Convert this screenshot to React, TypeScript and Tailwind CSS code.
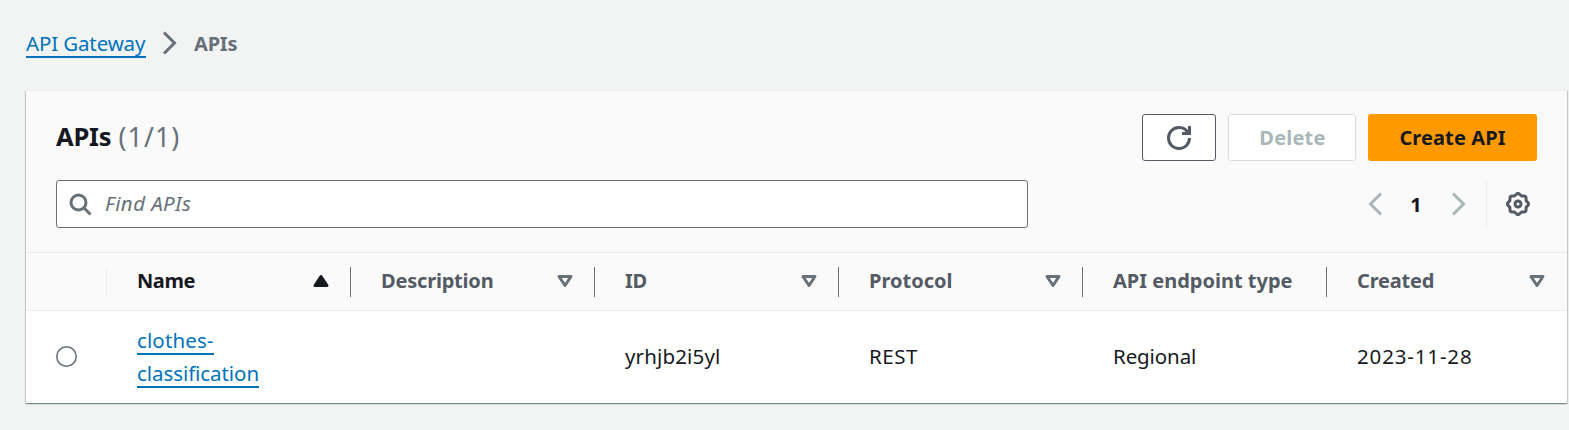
import React from "react";

const headCell = "flex h-[30px] items-center justify-between pb-[2px] pl-[30px]";

// Scalloped outline with eight rounded teeth
const gearPath =
  Array.from({ length: 96 }, (_, i) => {
    const a = (i / 96) * Math.PI * 2;
    const r = 9.7 + 0.85 * Math.cos(8 * a);
    return `${i ? "L" : "M"}${(12 + r * Math.cos(a)).toFixed(2)} ${(12 + r * Math.sin(a)).toFixed(2)}`;
  }).join("") + "z";

function SortIcon() {
  return (
    <svg viewBox="0 0 16 16" className="size-6 shrink-0 fill-none stroke-[#687078] stroke-2">
      <path d="M4 5h8l-4 6-4-6z" strokeLinejoin="round" />
    </svg>
  );
}

function Column({ label, className, sortable = true, last = false }: { label: string; className: string; sortable?: boolean; last?: boolean }) {
  return (
    <div className={`${headCell} ${last ? "flex-1 pr-[18px]" : "w-[244px] border-r border-[#687078] pr-[17px]"}`}>
      <span className={`whitespace-nowrap ${className}`}>{label}</span>
      {sortable && <SortIcon />}
    </div>
  );
}

export default function App() {
  return (
    <div className="h-[430px] w-[1569px] overflow-hidden bg-[#f2f3f3] pl-[26px] pr-[2px] font-['Noto_Sans',sans-serif] text-[20.5px] leading-[33px] text-[#16191f]">
      <nav className="flex h-[90px] items-start pt-[27px]">
        <a className="h-[31px] w-[120px] whitespace-nowrap border-b-2 border-[#0073bb] tracking-[-0.14px] text-[#0073bb]">API Gateway</a>
        <svg viewBox="0 0 16 16" className="ml-3 mt-1 size-6 fill-none stroke-[#687078] stroke-2">
          <path d="m4 1 7 7-7 7" />
        </svg>
        <span className="ml-3 text-[20px] font-bold tracking-[-0.2px] text-[#687078]">APIs</span>
      </nav>

      <main className="h-[313px] border-t border-[#eaeded] bg-white shadow-[0_1px_1px_0_rgba(0,28,36,0.3),1px_1px_1px_0_rgba(0,28,36,0.15),-1px_1px_1px_0_rgba(0,28,36,0.15)]">
        <header className="h-[161px] bg-[#fafafa] px-[30px] pt-[23px]">
          <div className="flex h-[47px] items-center justify-between">
            <h1 className="flex items-center gap-[7px] pb-[2px] text-[25.5px] font-bold tracking-[-0.2px]">
              APIs
              <span className="pt-px text-[26.5px] font-normal tracking-[1.2px] text-[#687078]">(1/1)</span>
            </h1>
            <div className="flex gap-3 text-[20px] font-bold">
              <button className="flex h-[47px] w-[74px] items-center justify-center rounded-[3px] border border-[#545b64] bg-white">
                <svg viewBox="0 0 16 16" className="size-6 overflow-visible fill-none stroke-[#545b64] stroke-2">
                  <path d="M10 5h5V0" />
                  <path d="M15 8a6.957 6.957 0 0 1-7 7 6.957 6.957 0 0 1-7-7 6.957 6.957 0 0 1 7-7 6.87 6.87 0 0 1 6.3 4" />
                </svg>
              </button>
              <button className="h-[47px] w-32 rounded-[3px] border border-[#d5dbdb] bg-white pl-px tracking-[0.2px] text-[#aab7b8]">Delete</button>
              <button className="h-[47px] w-[169px] rounded-[3px] bg-[#ff9900] tracking-[0.1px]">Create API</button>
            </div>
          </div>
          <div className="mt-[19px] flex items-center justify-between">
            <div className="flex h-12 w-[972px] items-center rounded-[3px] border border-[#687078] bg-white pl-[11px] text-[#687078]">
              <svg viewBox="0 0 16 16" className="size-6 overflow-visible fill-none stroke-[#687078] stroke-2">
                <circle cx="7" cy="7" r="5" />
                <path d="m15 15-4.5-4.5" />
              </svg>
              <span className="ml-[13px] pb-[2px] italic tracking-[0.4px]">Find APIs</span>
            </div>
            <div className="flex items-center">
              <svg viewBox="0 0 16 16" className="size-6 fill-none stroke-[#aab7b8] stroke-2">
                <path d="m12 1-7 7 7 7" />
              </svg>
              <span className="w-[60px] pr-[2px] text-center text-[20px] font-bold">1</span>
              <svg viewBox="0 0 16 16" className="size-6 fill-none stroke-[#aab7b8] stroke-2">
                <path d="m4 1 7 7-7 7" />
              </svg>
              <span className="ml-[15px] h-[47px] w-px bg-[#eaeded]" />
              <svg viewBox="0 0 24 24" className="ml-[19px] mr-[7px] size-6 overflow-visible fill-none stroke-[#545b64] stroke-3">
                <path d={gearPath} strokeLinejoin="round" />
                <circle cx="12" cy="12" r="3" />
              </svg>
            </div>
          </div>
        </header>

        <div className="flex h-[59px] items-center border-y border-[#eaeded] bg-[#fafafa] text-[20px] font-bold text-[#545b64]">
          <div className="h-[30px] w-[81px] border-r border-[#eaeded]" />
          <div className={`${headCell} w-[244px] border-r border-[#687078] pr-[17px] text-[#16191f]`}>
            <span className="tracking-[-0.4px]">Name</span>
            <svg viewBox="0 0 16 16" className="size-6 fill-[#16191f] stroke-[#16191f] stroke-2">
              <path d="M4 11h8L8 5l-4 6z" strokeLinejoin="round" />
            </svg>
          </div>
          <Column label="Description" className="tracking-[-0.2px]" />
          <Column label="ID" className="tracking-[-0.4px]" />
          <Column label="Protocol" className="" />
          <Column label="API endpoint type" className="" sortable={false} />
          <Column label="Created" className="tracking-[-0.2px]" last />
        </div>

        <div className="flex h-[92px] items-center pb-[2px]">
          <div className="w-[81px] pl-[30px]">
            <svg viewBox="0 0 21 21" className="size-[21px] fill-white stroke-[#687078] stroke-[1.5]">
              <circle cx="10.5" cy="10.5" r="9.75" />
            </svg>
          </div>
          <div className="flex w-[244px] flex-col items-start gap-[2px] pl-[30px] text-[#0073bb]">
            <a className="h-[31px] border-b-2 border-[#0073bb] tracking-[0.12px]">clothes-</a>
            <a className="h-[31px] border-b-2 border-[#0073bb] tracking-[-0.07px]">classification</a>
          </div>
          <div className="w-[244px]" />
          <div className="w-[244px] pl-[30px] tracking-[0.15px]">yrhjb2i5yl</div>
          <div className="w-[244px] pl-[30px] tracking-[0.5px]">REST</div>
          <div className="w-[244px] pl-[30px] tracking-[-0.1px]">Regional</div>
          <div className="pl-[30px] tracking-[0.85px]">2023-11-28</div>
        </div>
      </main>
    </div>
  );
}
